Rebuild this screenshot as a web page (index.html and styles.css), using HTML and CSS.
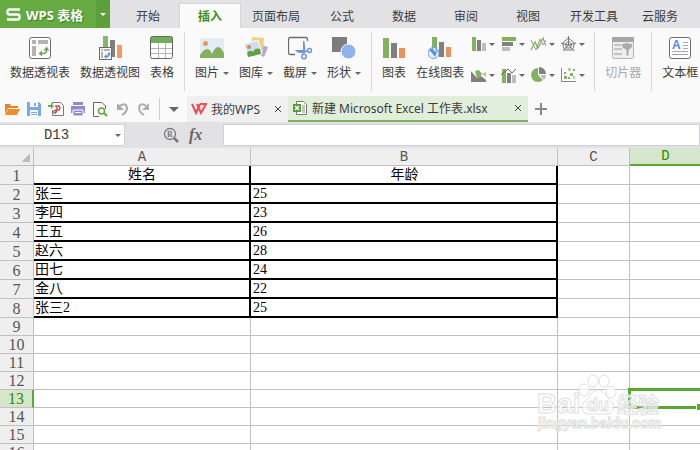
FILE: index.html
```html
<!DOCTYPE html>
<html lang="zh-CN">
<head>
  <meta charset="UTF-8" />
  <meta name="viewport" content="width=device-width, initial-scale=1.0" />
  <title>新建 Microsoft Excel 工作表.xlsx - WPS 表格</title>
  <link rel="stylesheet" href="styles.css">
</head>
<body>
  <header class="titlebar">
    <button class="app-btn">
      <svg width="15" height="13" viewBox="0 0 15 13"><path d="M14 1.500H3.500Q1.500 1.500 1.500 3.500V4.500Q1.500 6.500 3.500 6.500H11.500Q13.500 6.500 13.500 8.500V9.500Q13.500 11.500 11.500 11.500H1" fill="none" stroke="#fff" stroke-width="2.400"/></svg>
      <span>WPS 表格</span>
    </button>
    <button class="app-menu" aria-label="菜单"><i class="arrow"></i></button>
    <nav class="tabs">
      <button>开始</button>
      <button class="active">插入</button>
      <button>页面布局</button>
      <button>公式</button>
      <button>数据</button>
      <button>审阅</button>
      <button>视图</button>
      <button>开发工具</button>
      <button>云服务</button>
    </nav>
  </header>

  <div class="ribbon">
    <div class="group">
      <button class="tool">
        <svg width="24" height="24" viewBox="0 0 24 24"><rect x="1.500" y="1.500" width="21" height="21" rx="2" fill="#fff" stroke="#6d6d6d"/><path d="M4 4h4v4H4zM10 4h10v4H10zM4 10h4v10H4z" fill="#b4b4b4"/><path d="M12.500 17.500h3q3 0 3-4" fill="none" stroke="#6aa84f" stroke-width="1.500"/><path d="M14 14.500v6L10.500 17.500zM15.500 14.500h6l-3-4z" fill="#6aa84f"/></svg>
        <span class="label">数据透视表</span>
      </button>
      <button class="tool">
        <svg width="24" height="24" viewBox="0 0 24 24"><path d="M5 0h5v12H5z" fill="#87b867"/><path d="M12 4h5v17h-5z" fill="#808080"/><path d="M19 9h5v13h-5z" fill="#f09a66"/><rect x="1.500" y="11.500" width="12" height="12" fill="#fff" stroke="#6d6d6d"/><path d="M3 13h2v2H3zM6 13h6v2H6zM3 16h2v6H3z" fill="#b4b4b4"/><path d="M8 20.500h1q2 0 2-2" fill="none" stroke="#5b86e5" stroke-width="1.300"/><path d="M8.500 18v5L6 20.500zM8.800 18.500h4.400L11 16z" fill="#5b86e5"/></svg>
        <span class="label">数据透视图</span>
      </button>
      <button class="tool">
        <svg width="24" height="24" viewBox="0 0 24 24"><rect x="1" y="1" width="22" height="22" rx="2" fill="#fff"/><path d="M1 1h22v6H1z" fill="#74ad58"/><path d="M8.500 7v16M15.500 7v16M1 12.500h22M1 17.500h22" stroke="#b5b5b5"/><rect x=".5" y=".5" width="22" height="22" rx="2" fill="none" stroke="#666"/></svg>
        <span class="label">表格</span>
      </button>
    </div>

    <div class="group">
      <button class="tool">
        <svg width="24" height="24" viewBox="0 0 24 24"><path d="M0 2h24v20H0z" fill="#e3ebf3"/><circle cx="5.500" cy="7.500" r="2.500" fill="#f0954f"/><path d="M0 22V19Q4 13 7 13T12 18Q15 11 18 11T24 17V22z" fill="#82b05e"/></svg>
        <span class="label">图片<i class="arrow"></i></span>
      </button>
      <button class="tool">
        <svg width="24" height="24" viewBox="0 0 24 24"><path d="M18 9l6 2-4 10-6-3z" fill="#b3a5ec"/><path d="M8 1l12 1-1 14-12-1z" fill="#f3cd83"/><path d="M0 8l14-4 4 14-14 4z" fill="#c9e1f7" stroke="#fff"/><circle cx="5" cy="11" r="2" fill="#ef8232"/><path d="M4 21l-1-4q3-4 6-1 2-5 7-3l1 5z" fill="#5fa33c"/></svg>
        <span class="label">图库<i class="arrow"></i></span>
      </button>
      <button class="tool">
        <svg width="24" height="24" viewBox="0 0 24 24"><path d="M7 18.500H2.500q-2 0-2-2V3.500q0-2 2-2h15q2 0 2 2V5" fill="none" stroke="#6d6d6d" stroke-width="1.300"/><path d="M15 5h1.500l1 11-2.500 2zM7 14h10v3q-7 1-10-3z" fill="#6a95e6"/><g fill="none" stroke="#6a95e6" stroke-width="1.500"><path d="M16 16l3-1"/><circle cx="21.500" cy="14.500" r="2"/><circle cx="16" cy="20.500" r="2.200"/></g></svg>
        <span class="label">截屏<i class="arrow"></i></span>
      </button>
      <button class="tool">
        <svg width="24" height="24" viewBox="0 0 24 24"><path d="M0 1h15v15H0z" fill="#7d7d7d"/><circle cx="16.500" cy="15.500" r="7.500" fill="#8fb2ea" stroke="#fff"/></svg>
        <span class="label">形状<i class="arrow"></i></span>
      </button>
    </div>

    <div class="group">
      <button class="tool">
        <svg width="24" height="24" viewBox="0 0 24 24"><path d="M1 2h6v20H1z" fill="#82b25e"/><path d="M9 7h6v15H9z" fill="#808080"/><path d="M17 12h6v10h-6z" fill="#ec915d"/></svg>
        <span class="label">图表</span>
      </button>
      <button class="tool">
        <svg width="24" height="24" viewBox="0 0 24 24"><path d="M4 1h5v13H4z" fill="#82b25e"/><path d="M11 6h5v15h-5z" fill="#808080"/><path d="M18 11h5v10h-5z" fill="#ec915d"/><circle cx="5.500" cy="17" r="5.500" fill="#e6f0fc" stroke="#6b9ee0"/><path d="M1 14l4-2 1 3 3 1-2 5-3-4zM7 12l4 4-3-1z" fill="#5b92dc"/></svg>
        <span class="label">在线图表</span>
      </button>
      <div class="charts">
        <button aria-label="柱形图"><svg width="16" height="16" viewBox="0 0 16 16"><path d="M2 1h4v14H2z" fill="#82b25e"/><path d="M7 4h4v11H7z" fill="#808080"/><path d="M12 7h4v8h-4z" fill="#bdbdbd"/></svg><i class="arrow"></i></button>
        <button aria-label="条形图"><svg width="16" height="16" viewBox="0 0 16 16"><path d="M2 1h14v4H2z" fill="#82b25e"/><path d="M2 6h11v4H2z" fill="#808080"/><path d="M2 11h8v4H2z" fill="#bdbdbd"/></svg><i class="arrow"></i></button>
        <button aria-label="折线图"><svg width="16" height="16" viewBox="0 0 16 16"><path d="M1 14l4-8 3 6 5-10 3 8" fill="none" stroke="#82b25e" stroke-width="1.300"/><path d="M1 4l5 10 4-11 3 6 3-5" fill="none" stroke="#999"/></svg><i class="arrow"></i></button>
        <button aria-label="雷达图"><svg width="16" height="16" viewBox="0 0 16 16"><g fill="none" stroke="#777"><path d="M8.500 2l6 5-2 7h-8l-2-7zM8.500 5l3 3-1 4h-4l-1-4zM8.500 0v9M1 7l7.500 2L16 7M3 15l5.500-6 5.500 6"/></g></svg><i class="arrow"></i></button>
        <button aria-label="面积图"><svg width="16" height="16" viewBox="0 0 16 16"><path d="M1 4l6 7 4-2 5 4v2H1z" fill="#808080"/><path d="M5 4l4-1 3 4-2 3-3 1z" fill="#82b25e"/><path d="M12 7l4-2v5z" fill="#a8cb91"/></svg><i class="arrow"></i></button>
        <button aria-label="组合图"><svg width="16" height="16" viewBox="0 0 16 16"><path d="M2 2h4v14H2z" fill="#82b25e"/><path d="M7 6h4v10H7z" fill="#808080"/><path d="M12 8h4v8h-4z" fill="#bdbdbd"/><path d="M1 8l7-6 4 4 4-4" fill="none" stroke="#666"/></svg><i class="arrow"></i></button>
        <button aria-label="饼图"><svg width="16" height="16" viewBox="0 0 16 16"><path d="M8 1a7 7 0 1 0 5 12L8 8z" fill="#82b25e"/><path d="M9 0a7 7 0 0 1 7 7H9z" fill="#808080"/><path d="M10 8h6q0 3-2 5z" fill="#bdbdbd"/></svg><i class="arrow"></i></button>
        <button aria-label="散点图"><svg width="16" height="16" viewBox="0 0 16 16"><path d="M1.500 1v13.500H16" fill="none" stroke="#888"/><path d="M4 9h3v3H4zM10 6h3v3h-3z" fill="#82b25e"/><path d="M8 1h3v3H8zM13 9h2v3h-2z" fill="#b5d3a1"/><path d="M4 5h2v2H4zM8 10h2v2H8zM13 2h2v2h-2z" fill="#999"/></svg><i class="arrow"></i></button>
      </div>
    </div>

    <div class="group">
      <button class="tool" disabled>
        <svg width="24" height="24" viewBox="0 0 24 24"><rect x="1.500" y="1.500" width="21" height="21" rx="1" fill="#eee" stroke="#b5b5b5"/><path d="M1 1h22v5H1z" fill="#a7a7a7"/><path d="M3 8h7v2H3zM3 12h8v2H3zM3 17h8v2H3z" fill="#c4c4c4"/><path d="M10 8q6-3 12 0 0 4-4 6v6h-3v-6q-5-2-5-6z" fill="#aaa" stroke="#fff" stroke-width=".7"/></svg>
        <span class="label">切片器</span>
      </button>
    </div>

    <div class="group">
      <button class="tool">
        <svg width="24" height="24" viewBox="0 0 24 24"><rect x="1.500" y="1.500" width="21" height="21" rx="2" fill="#fff" stroke="#6d6d6d"/><text x="4" y="13" class="icon-a">A</text><path d="M15 6.500h5M15 9.500h5M15 12.500h5M4 15.500h16M4 18.500h16" stroke="#aaa"/></svg>
        <span class="label">文本框</span>
      </button>
    </div>
  </div>

  <div class="quickbar">
    <div class="quick">
      <button aria-label="打开"><svg width="16" height="16" viewBox="0 0 16 16"><path d="M1 13V3h5l1 2h7v2H4z" fill="#e88426"/><path d="M4 8h12l-3 6H1z" fill="#f58b2a"/></svg></button>
      <button aria-label="保存"><svg width="16" height="16" viewBox="0 0 16 16"><path d="M1 1h12l2 2v12H1z" fill="#7ba6ea"/><path d="M4 1h8v5H4zM4 9h8v6H4z" fill="#fff"/><path d="M8 2h2v3H8zM5 11h6v1H5zM5 13h6v1H5z" fill="#7ba6ea"/></svg></button>
      <button aria-label="输出为PDF"><svg width="16" height="16" viewBox="0 0 16 16"><path d="M4.500 3V1.500h8l3 3v10h-11V9" fill="#fff" stroke="#777"/><path d="M7 5h4q2 2 0 4H9q-4 0-3 3 2 1 3-4V5" fill="none" stroke="#c94a4a" stroke-width="1.300"/><path d="M0 4h3V2l3 3-3 3V6H0z" fill="#6aa84f"/></svg></button>
      <button aria-label="打印"><svg width="16" height="16" viewBox="0 0 16 16"><path d="M3 1h10v3H3zM1 5h14v7H1z" fill="#8f8cc8"/><path d="M3 9h10v6H3z" fill="#8f8cc8" stroke="#fff"/><path d="M5 11.500h6" stroke="#fff"/></svg></button>
      <button aria-label="打印预览"><svg width="16" height="16" viewBox="0 0 16 16"><path d="M7 15.500H1.500V1.500H10l3.500 3.500V8" fill="none" stroke="#666"/><circle cx="9.500" cy="10" r="3" fill="#fff" stroke="#62a844" stroke-width="1.500"/><path d="M12 12l3 3" stroke="#62a844" stroke-width="2"/></svg></button>
      <button aria-label="撤销"><svg width="16" height="16" viewBox="0 0 16 16"><path d="M4 6q8-6 9 1 0 4-5 7" fill="none" stroke="#aaa" stroke-width="2"/><path d="M3 2v7h7z" fill="#aaa"/></svg></button>
      <button aria-label="恢复"><svg width="16" height="16" viewBox="0 0 16 16"><path d="M12 6q-8-6-9 1 0 4 5 7" fill="none" stroke="#b0b0b0" stroke-width="2"/><path d="M13 2v7H6z" fill="#b0b0b0"/></svg></button>
    </div>
    <button class="more" aria-label="更多"><i class="arrow big"></i></button>
    <div class="doc">
      <svg width="16" height="12" viewBox="0 0 16 12"><path d="M1 1l4 9 4-9M6 1l4 9 5-9H9" fill="none" stroke="#ee4c50" stroke-width="2"/></svg>
      <span>我的WPS</span>
      <button class="close" aria-label="关闭"><svg width="8" height="8" viewBox="0 0 8 8"><path d="M1 1l6 6M7 1L1 7" stroke="#444"/></svg></button>
    </div>
    <div class="doc current">
      <svg width="16" height="16" viewBox="0 0 16 16"><path d="M4.500 4V1.500h7l3 3v10h-10V12" fill="#fff" stroke="#777"/><path d="M10 6h3M10 8h3M10 10h3M10 12h3" stroke="#888"/><path d="M1 4h8v8H1z" fill="#549a35"/><path d="M3 6l4 4M7 6l-4 4" stroke="#fff" stroke-width="1.500"/></svg>
      <span>新建 Microsoft Excel 工作表.xlsx</span>
      <button class="close" aria-label="关闭"><svg width="8" height="8" viewBox="0 0 8 8"><path d="M1 1l6 6M7 1L1 7" stroke="#444"/></svg></button>
    </div>
    <button class="add" aria-label="新建"><svg width="12" height="12" viewBox="0 0 12 12"><path d="M0 6h12M6 0v12" stroke="#888" stroke-width="2"/></svg></button>
  </div>

  <div class="formula-bar">
    <div class="name-box">
      <input type="text" value="D13" aria-label="名称框">
      <i class="arrow"></i>
    </div>
    <div class="fx">
      <button aria-label="查找"><svg width="16" height="16" viewBox="0 0 16 16"><circle cx="7" cy="7" r="5.500" fill="none" stroke="#777" stroke-width="1.300"/><path d="M11 11l4 4" stroke="#777" stroke-width="2.500"/><text x="4" y="10" class="icon-r">R</text></svg></button>
      <button class="fx-btn">fx</button>
    </div>
    <input class="formula" type="text" aria-label="编辑栏">
  </div>

  <main class="sheet">
    <table>
      <colgroup>
        <col class="c-head"><col class="c-a"><col class="c-b"><col class="c-n"><col class="c-n">
      </colgroup>
      <thead>
        <tr><th class="corner"></th><th>A</th><th>B</th><th>C</th><th class="sel">D</th></tr>
      </thead>
      <tbody>
        <tr class="data title"><th>1</th><td>姓名</td><td>年龄</td><td></td><td></td></tr>
        <tr class="data"><th>2</th><td>张三</td><td>25</td><td></td><td></td></tr>
        <tr class="data"><th>3</th><td>李四</td><td>23</td><td></td><td></td></tr>
        <tr class="data"><th>4</th><td>王五</td><td>26</td><td></td><td></td></tr>
        <tr class="data"><th>5</th><td>赵六</td><td>28</td><td></td><td></td></tr>
        <tr class="data"><th>6</th><td>田七</td><td>24</td><td></td><td></td></tr>
        <tr class="data"><th>7</th><td>金八</td><td>22</td><td></td><td></td></tr>
        <tr class="data"><th>8</th><td>张三2</td><td>25</td><td></td><td></td></tr>
        <tr><th>9</th><td></td><td></td><td></td><td></td></tr>
        <tr><th>10</th><td></td><td></td><td></td><td></td></tr>
        <tr><th>11</th><td></td><td></td><td></td><td></td></tr>
        <tr><th>12</th><td></td><td></td><td></td><td></td></tr>
        <tr><th class="sel">13</th><td></td><td></td><td></td><td class="cursor"></td></tr>
        <tr><th>14</th><td></td><td></td><td></td><td></td></tr>
        <tr><th>15</th><td></td><td></td><td></td><td></td></tr>
        <tr><th>16</th><td></td><td></td><td></td><td></td></tr>
      </tbody>
    </table>
    <svg class="watermark" width="126" height="64" viewBox="0 0 126 64">
      <g class="mark">
        <text x="0" y="41" class="big">Bai</text>
        <ellipse cx="47" cy="18" rx="5" ry="6"/>
        <ellipse cx="56" cy="9" rx="5" ry="6"/>
        <ellipse cx="67" cy="9" rx="5" ry="6"/>
        <ellipse cx="74" cy="20" rx="5" ry="6"/>
        <path d="M61 18c6 0 8 7 13 11 5 5 2 13-4 13H51c-6 0-8-8-3-13 5-4 7-11 13-11z"/>
        <text x="50" y="39" class="du">du</text>
        <text x="80" y="40" class="cn">经验</text>
        <text x="1" y="56" class="url">jingyan.baidu.com</text>
      </g>
    </svg>
  </main>
</body>
</html>
```
FILE: styles.css
```css
* {
  box-sizing: border-box;
}

body {
  margin: 0;
  height: 100vh;
  display: flex;
  flex-direction: column;
  overflow: hidden;
  background: #fff;
  color: #3c3c3c;
  font-family: "Noto Sans", "Noto Sans CJK SC", sans-serif;
  font-size: 12px;
}

button,
input {
  margin: 0;
  padding: 0;
  border: none;
  background: none;
  color: inherit;
  font: inherit;
}

svg {
  display: block;
  flex: none;
}

.arrow {
  flex: none;
  border: 3px solid transparent;
  border-top-color: #666;
  border-bottom: none;
}

.arrow.big {
  border-width: 5px;
  border-bottom: none;
}

/* title bar */
.titlebar {
  flex: none;
  display: flex;
  height: 28px;
  background: #e2e2e4;
}

.app-btn {
  display: flex;
  align-items: center;
  gap: 5px;
  width: 96px;
  padding-left: 6px;
  background: #65ab41;
  color: #fff;
  font-size: 13px;
  font-weight: bold;
  text-shadow: 1px 1px 1px #3f7a22;
  white-space: nowrap;
}

.app-menu {
  display: flex;
  align-items: center;
  justify-content: center;
  width: 14px;
  background: #5c9f3b;
}

.app-menu .arrow {
  border-top-color: #fff;
}

.tabs {
  display: flex;
  align-items: flex-end;
  padding-left: 7px;
}

.tabs button {
  flex: none;
  height: 25px;
  min-width: 62px;
  padding: 0 11px;
}

.tabs .active {
  border: 1px solid #d5d5d8;
  border-bottom: none;
  background: #fafafa;
  color: #3f8f1c;
  font-weight: bold;
}

/* ribbon */
.ribbon {
  flex: none;
  display: flex;
  height: 67px;
  padding: 4px 0;
  background: #fafafa;
}

.group {
  flex: none;
  display: flex;
  gap: 10px;
  padding: 0 10px;
  border-right: 1px solid #d8d8d8;
}

.group:last-child {
  border-right: none;
}

.tool {
  display: flex;
  flex-direction: column;
  align-items: center;
  padding-top: 4px;
}

.tool:disabled {
  color: #a8a8a8;
}

.label {
  display: flex;
  align-items: center;
  gap: 4px;
  height: 18px;
  margin-top: 4px;
  line-height: 18px;
  white-space: nowrap;
}

.charts {
  display: grid;
  grid-template-columns: repeat(4, 24px);
  grid-auto-rows: 24px;
  gap: 7px 6px;
  margin-left: -4px;
}

.charts button {
  display: flex;
  align-items: center;
  gap: 3px;
}

.icon-a {
  fill: #5b86e5;
  font: bold 12px "Liberation Sans", sans-serif;
}

.icon-r {
  fill: #777;
  font: bold 8px "Liberation Serif", serif;
}

/* quick access and document tabs */
.quickbar {
  flex: none;
  display: flex;
  height: 27px;
  padding-top: 1px;
  background: #fafafa;
}

.quick {
  display: flex;
  align-items: center;
  gap: 6px;
  width: 160px;
  margin: 2px 0;
  padding-left: 4px;
  border-right: 1px solid #d0d0d0;
}

.more {
  width: 27px;
  display: flex;
  align-items: center;
  justify-content: center;
}

.doc {
  display: flex;
  align-items: center;
  gap: 4px;
  width: 101px;
  padding: 0 6px 0 4px;
  background: #f0f0f0;
  white-space: nowrap;
}

.doc.current {
  width: 240px;
  border-bottom: 2px solid #7db35e;
  background: #e1eedb;
}

.close {
  margin-left: auto;
}

.add {
  padding: 0 7px;
}

/* formula bar */
.formula-bar {
  flex: none;
  display: flex;
  height: 26px;
  padding: 2px 0;
  background: #e2e2e4;
}

.name-box {
  display: flex;
  align-items: center;
  width: 125px;
  padding-right: 3px;
  border: 1px solid #d0d0d6;
  border-left: none;
  background: #fff;
}

.name-box input {
  width: 115px;
  padding-right: 2px;
  font-family: "Liberation Mono", monospace;
  font-size: 14px;
  text-align: center;
}

.fx {
  display: flex;
  align-items: center;
  gap: 10px;
  width: 98px;
  padding-left: 38px;
}

.fx-btn {
  color: #666;
  font: italic bold 16px "Liberation Serif", serif;
}

.formula {
  flex: 1;
  min-width: 0;
  border: 1px solid #d0d0d6;
  background: #fff;
}

/* sheet */
.sheet {
  position: relative;
  flex: 1;
  min-height: 0;
  overflow: hidden;
}

table {
  width: 702px;
  border-collapse: separate;
  border-spacing: 0;
  table-layout: fixed;
}

.c-head { width: 34px; }
.c-a { width: 217px; }
.c-b { width: 307px; }
.c-n { width: 72px; }

th,
td {
  height: 18px;
  padding: 1px 0 0;
  border: solid #c0c0c0;
  border-width: 0 1px 1px 0;
  line-height: 16px;
  white-space: nowrap;
}

th {
  background: #efefef;
  color: #555;
  font-weight: normal;
  font-size: 16px;
  font-family: "Liberation Serif", serif;
}

thead th {
  font-family: "Liberation Mono", monospace;
  font-size: 14px;
}

.corner {
  background: linear-gradient(135deg, transparent 50%, #bbb 50%) 21px 5px / 9px 9px no-repeat #efefef;
}

.data th,
.data td {
  height: 19px;
}

td {
  color: #000;
  font-family: "Liberation Serif", "Noto Sans CJK SC", serif;
  font-size: 14px;
}

.data td:nth-child(2),
.data td:nth-child(3) {
  padding-left: 1px;
  border-color: #000;
  border-width: 0 2px 2px 0;
}

.data td:nth-child(3) {
  padding-left: 2px;
}

.title td {
  text-align: center;
}

thead .sel {
  padding-top: 0;
  border-bottom: 2px solid #5aa832;
  background: #d6e6cd;
  color: #2f8a00;
}

tbody .sel {
  border-right: 2px solid #5aa832;
  background: #d6e6cd;
  color: #2f8a00;
}

.cursor {
  position: relative;
}

.cursor::before {
  content: "";
  position: absolute;
  inset: -2px;
  border: 3px solid #5aa832;
}

.cursor::after {
  content: "";
  position: absolute;
  right: -3px;
  bottom: -3px;
  width: 7px;
  height: 6px;
  border: solid #fff;
  border-width: 1px 0 0 1px;
  background: #5aa832;
}

/* site mark over the cells */
.watermark {
  position: absolute;
  right: 37px;
  top: 224px;
}

.mark {
  fill: #fff;
  fill-opacity: 0.7;
  stroke: #e0e0e0;
  stroke-width: 1;
  font-family: "Liberation Sans", "Noto Sans CJK SC", sans-serif;
  font-weight: bold;
}

.mark .big { font-size: 28px; }
.mark .du { font-size: 18px; }
.mark .cn { font-size: 21px; }
.mark .url { font-size: 14px; }
```
